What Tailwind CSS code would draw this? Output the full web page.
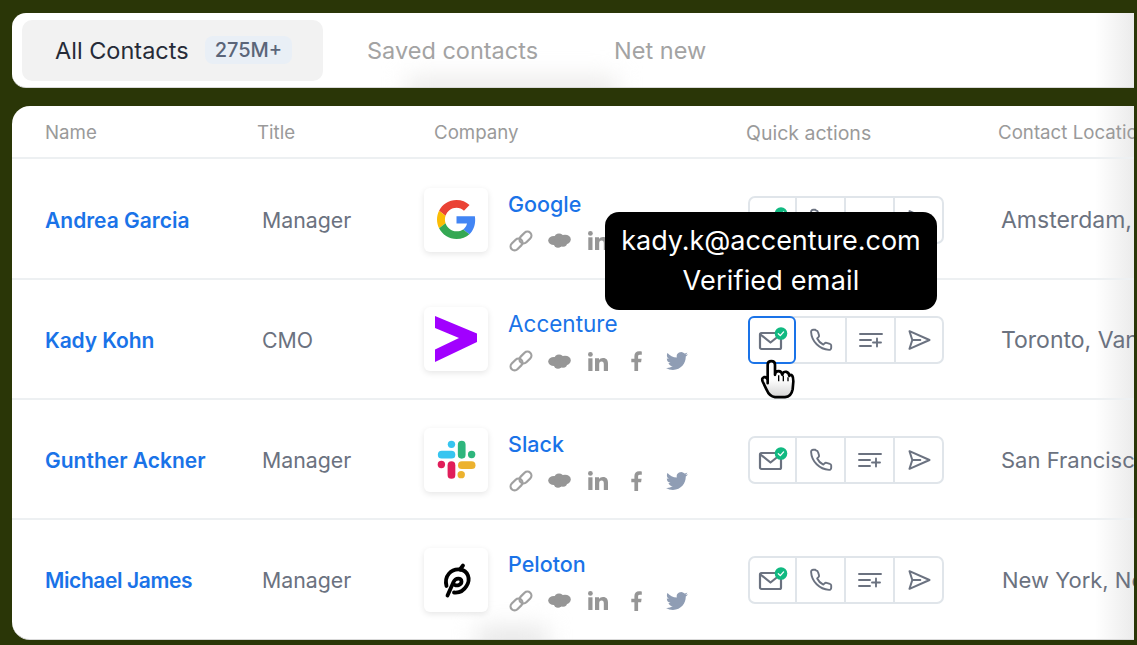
<!DOCTYPE html>
<html>
<head>
<meta charset="utf-8">
<script src="https://cdn.jsdelivr.net/npm/@tailwindcss/browser@4"></script>
</head>
<body class="m-0">
<svg class="hidden">
  <symbol id="link" viewBox="0 0 24 24"><g fill="none" stroke="currentColor" stroke-width="2.200"><rect x="0.800" y="11.500" width="13.500" height="8" rx="4" transform="rotate(-45 7.500 15.500)"/><rect x="9.700" y="4.500" width="13.500" height="8" rx="4" transform="rotate(-45 16.500 8.500)"/></g></symbol>
  <symbol id="cloud" viewBox="0 0 23 15"><g fill="currentColor"><ellipse cx="6" cy="7.500" rx="5.800" ry="4.600"/><ellipse cx="11" cy="5" rx="4.800" ry="4.600"/><ellipse cx="17" cy="6.500" rx="5.800" ry="4.800"/><ellipse cx="10" cy="10.500" rx="4.400" ry="4.200"/><ellipse cx="15" cy="10" rx="4" ry="3.800"/></g></symbol>
  <symbol id="in" viewBox="0 0 20 19"><g fill="currentColor"><circle cx="2.400" cy="2.400" r="2.400"/><rect x="0.300" y="6.300" width="4.200" height="12.700"/><path d="M7 6.300h4v1.800c.7-1.200 2.200-2.100 4-2.100 3.700 0 5 2.300 5 5.800V19h-4.200v-6.500c0-1.700-.5-3-2.200-3-1.800 0-2.400 1.300-2.400 3V19H7z"/></g></symbol>
  <symbol id="fb" viewBox="0 0 12 20"><path fill="currentColor" d="M3.400 20V11.200H0.300V7.700h3.100V5.100C3.400 2 5.300.3 8 .3c1.300 0 2.500.1 2.800.2v3.200H8.900c-1.500 0-1.800.7-1.800 1.800v2.200h3.500l-.5 3.500h-3V20z"/></symbol>
  <symbol id="tw" viewBox="0 0 24 24"><path fill="currentColor" d="M23.953 4.570a10 10 0 0 1-2.825.775 4.958 4.958 0 0 0 2.163-2.723c-.951.555-2.005.959-3.127 1.184a4.920 4.920 0 0 0-8.384 4.482C7.690 8.095 4.067 6.130 1.640 3.162a4.822 4.822 0 0 0-.666 2.475c0 1.710.870 3.213 2.188 4.096a4.904 4.904 0 0 1-2.228-.616v.060a4.923 4.923 0 0 0 3.946 4.827 4.996 4.996 0 0 1-2.212.085 4.936 4.936 0 0 0 4.604 3.417 9.867 9.867 0 0 1-6.102 2.105c-.390 0-.779-.023-1.170-.067a13.995 13.995 0 0 0 7.557 2.209c9.053 0 13.998-7.496 13.998-13.985 0-.210 0-.420-.015-.630A9.935 9.935 0 0 0 24 4.590z"/></symbol>
  <symbol id="mail" viewBox="0 0 30 26"><g fill="none" stroke="#6b7280" stroke-width="2.200" stroke-linecap="round" stroke-linejoin="round"><rect x="2" y="6" width="21" height="16" rx="1.500"/><path d="M2.500 7.500 12.500 15.500 22.500 7.500"/></g><circle cx="23" cy="6.500" r="6.300" fill="#10b981"/><path d="M20.300 6.700l2 1.900 3.300-3.700" fill="none" stroke="#fff" stroke-width="1.300" stroke-linecap="round" stroke-linejoin="round"/></symbol>
  <symbol id="phone" viewBox="0 0 24 24"><path fill="none" stroke="#6b7280" stroke-width="1.900" stroke-linecap="round" stroke-linejoin="round" d="M6.500 1.800H4.200C3 1.800 2 2.800 2.100 4c.5 9.500 8.400 17.300 17.900 17.900 1.200.1 2.200-.9 2.200-2.100v-2.300c0-.8-.5-1.500-1.300-1.700l-3.400-1c-.7-.2-1.400 0-1.900.5l-1.300 1.300c-2.600-1.200-4.900-3.500-6.100-6.100l1.300-1.300c.5-.5.700-1.200.5-1.900l-1-3.400c-.2-.8-.9-1.300-1.700-1.300z"/></symbol>
  <symbol id="list" viewBox="0 0 24 16"><path fill="none" stroke="#6b7280" stroke-width="1.900" stroke-linecap="round" d="M1 2h22M1 8h11M1 14h11M18 6.500v8M14 10.500h8"/></symbol>
  <symbol id="send" viewBox="0 0 24 22"><path fill="none" stroke="#6b7280" stroke-width="2" stroke-linejoin="round" stroke-linecap="round" d="M2.500 2.200 22.500 11 2.500 19.800 5.300 11zM5.300 11h8"/></symbol>
  <symbol id="google" viewBox="0 0 48 48"><path fill="#EA4335" d="M24 9.500c3.540 0 6.710 1.220 9.210 3.600l6.850-6.850C35.900 2.380 30.470 0 24 0 14.620 0 6.510 5.380 2.560 13.220l7.980 6.190C12.430 13.720 17.740 9.500 24 9.500z"/><path fill="#4285F4" d="M46.980 24.550c0-1.570-.15-3.090-.38-4.550H24v9.020h12.940c-.58 2.960-2.260 5.480-4.780 7.180l7.730 6c4.510-4.180 7.090-10.360 7.090-17.650z"/><path fill="#FBBC05" d="M10.530 28.590c-.48-1.450-.76-2.990-.76-4.590s.27-3.140.76-4.590l-7.980-6.190C.92 16.460 0 20.120 0 24c0 3.880.92 7.540 2.560 10.780l7.970-6.190z"/><path fill="#34A853" d="M24 48c6.480 0 11.930-2.130 15.890-5.810l-7.730-6c-2.150 1.450-4.920 2.300-8.160 2.300-6.260 0-11.570-4.220-13.470-9.910l-7.980 6.190C6.510 42.620 14.620 48 24 48z"/></symbol>
</svg>

<div class="relative w-[1137px] h-[645px] overflow-hidden bg-[#2a3607] pl-3 pt-[13px] pr-[3px]" style="font-family:Inter,'Liberation Sans',sans-serif">

  <!-- Tabs -->
  <div class="relative h-[75px] bg-[linear-gradient(90deg,#fff_1083px,#ebebeb_100%)] border-b border-[#d9d9d9] rounded-l-[14px] flex items-center pl-[10px] overflow-hidden">
    <div class="absolute left-[395px] top-[64px] w-[210px] h-[30px] bg-[#ecebea] blur-md"></div>
    <div class="relative w-[301px] h-[61px] rounded-[10px] bg-[#f2f2f2] flex items-center pl-[33px]">
      <span class="pt-[2px] text-[23.500px] text-[#262b38] leading-none">All Contacts</span>
      <span class="ml-[16px] h-[28px] px-[10px] flex items-center rounded-[8px] bg-[#e9eff6] text-[20px] font-medium text-[#5b6579]">275M+</span>
    </div>
    <span class="relative ml-[44px] pt-[2px] text-[23.500px] text-[#a3a3a3]">Saved contacts</span>
    <span class="relative ml-[76px] pt-[2px] text-[23.500px] text-[#a3a3a3]">Net new</span>
  </div>

  <!-- Table -->
  <div class="relative mt-[18px] h-[534px] bg-[linear-gradient(90deg,#fff_1083px,#ebebeb_100%)] border-b border-[#d9d9d9] rounded-l-[18px] overflow-hidden">
    <div class="absolute left-[465px] top-[522px] w-[70px] h-[24px] bg-[#e4e4e4] blur-md"></div>
    <div class="relative h-[53px] flex items-center pl-[33px] pt-[4px] border-b-2 border-[#edf0f2] text-[18.700px] text-[#9a9a9a] whitespace-nowrap overflow-hidden">
      <span class="w-[212px] shrink-0">Name</span>
      <span class="w-[177px] shrink-0">Title</span>
      <span class="w-[312px] shrink-0">Company</span>
      <span class="w-[252px] shrink-0 text-[19.500px]">Quick actions</span>
      <span>Contact Location</span>
    </div>

    <!-- Row 1 -->
    <div class="relative h-[121px] flex items-center pl-[33px] pt-[3px] border-b-2 border-[#edf0f2] whitespace-nowrap overflow-hidden">
      <span class="pt-[2px] w-[217px] shrink-0 text-[21px] font-semibold text-[#1a73e8]">Andrea Garcia</span>
      <span class="pt-[2px] w-[162px] shrink-0 text-[21.300px] text-[#6b7280]">Manager</span>
      <div class="w-[324px] shrink-0 flex">
        <div class="w-[64px] h-[64px] rounded-[6px] bg-white shadow-[0_2px_6px_rgba(0,0,0,0.1)] flex items-center justify-center"><svg class="w-[39px] h-[39px]"><use href="#google"/></svg></div>
        <div class="ml-[20px] mt-[2px]">
          <div class="text-[21.500px] font-medium text-[#1a73e8] leading-[28px]">Google</div>
          <div class="mt-[11px] h-[24px] flex items-center text-[#a0a0a0]">
            <svg class="w-[24px] h-[24px] ml-[1px]"><use href="#link"/></svg>
            <svg class="w-[23px] h-[15px] ml-[15px] text-[#969696]"><use href="#cloud"/></svg>
            <svg class="w-[20px] h-[19px] ml-[17px] text-[#969696]"><use href="#in"/></svg>
            <svg class="w-[12px] h-[20px] ml-[23px] text-[#969696]"><use href="#fb"/></svg>
            <svg class="w-[22px] h-[22px] ml-[23px] text-[#8f9db4]"><use href="#tw"/></svg>
          </div>
        </div>
      </div>
      <div class="w-[254px] shrink-0 flex">
        <div class="flex w-[196px] h-[48px] rounded-[7px] border-2 border-[#e0e5ea]">
          <div class="w-[45px] flex items-center justify-center"><svg class="ml-[1px] w-[30px] h-[26px]"><use href="#mail"/></svg></div>
          <div class="w-[49px] flex items-center justify-center border-l-2 border-[#e0e5ea]"><svg class="w-[24px] h-[24px]"><use href="#phone"/></svg></div>
          <div class="w-[49px] flex items-center justify-center border-l-2 border-[#e0e5ea]"><svg class="w-[24px] h-[16px]"><use href="#list"/></svg></div>
          <div class="flex-1 flex items-center justify-center border-l-2 border-[#e0e5ea]"><svg class="w-[24px] h-[22px]"><use href="#send"/></svg></div>
        </div>
      </div>
      <span class="text-[23px] text-[#6b7280] ml-[-1px]">Amsterdam, Netherlands</span>
    </div>

    <!-- Row 2 -->
    <div class="relative h-[120px] flex items-center pl-[33px] pt-[2px] border-b-2 border-[#edf0f2] whitespace-nowrap overflow-hidden">
      <span class="pt-[2px] w-[217px] shrink-0 text-[21px] tracking-[-0.1px] font-semibold text-[#1a73e8]">Kady Kohn</span>
      <span class="pt-[2px] w-[162px] shrink-0 text-[21.300px] text-[#6b7280]">CMO</span>
      <div class="w-[324px] shrink-0 flex">
        <div class="w-[64px] h-[64px] rounded-[6px] bg-white shadow-[0_2px_6px_rgba(0,0,0,0.1)] flex items-center justify-center"><svg class="w-[42px] h-[46px]" viewBox="0 0 42 46"><path fill="#a100ff" d="M0 0 42 17.500V26L0 46V33.500L24 22 0 12z"/></svg></div>
        <div class="ml-[20px] mt-[3px]">
          <div class="text-[22.500px] text-[#1a73e8] leading-[28px]">Accenture</div>
          <div class="mt-[11px] h-[24px] flex items-center text-[#a0a0a0]">
            <svg class="w-[24px] h-[24px] ml-[1px]"><use href="#link"/></svg>
            <svg class="w-[23px] h-[15px] ml-[15px] text-[#969696]"><use href="#cloud"/></svg>
            <svg class="w-[20px] h-[19px] ml-[17px] text-[#969696]"><use href="#in"/></svg>
            <svg class="w-[12px] h-[20px] ml-[23px] text-[#969696]"><use href="#fb"/></svg>
            <svg class="w-[22px] h-[22px] ml-[23px] text-[#8f9db4]"><use href="#tw"/></svg>
          </div>
        </div>
      </div>
      <div class="w-[254px] shrink-0 flex">
        <div class="flex w-[196px] h-[48px] rounded-[7px] border-2 border-[#e0e5ea]">
          <div class="w-[48px] -ml-[2px] -mt-[2px] flex items-center justify-center border-2 border-[#1a73e8] rounded-[6px] bg-white h-[48px] shrink-0"><svg class="ml-[1px] w-[30px] h-[26px]"><use href="#mail"/></svg></div>
          <div class="w-[49px] flex items-center justify-center"><svg class="w-[24px] h-[24px]"><use href="#phone"/></svg></div>
          <div class="w-[49px] flex items-center justify-center border-l-2 border-[#e0e5ea]"><svg class="w-[24px] h-[16px]"><use href="#list"/></svg></div>
          <div class="flex-1 flex items-center justify-center border-l-2 border-[#e0e5ea]"><svg class="w-[24px] h-[22px]"><use href="#send"/></svg></div>
        </div>
      </div>
      <span class="text-[23px] text-[#6b7280] ml-[-1px]">Toronto, Vancouver</span>
    </div>

    <!-- Row 3 -->
    <div class="relative h-[120px] flex items-center pl-[33px] pt-[2px] border-b-2 border-[#edf0f2] whitespace-nowrap overflow-hidden">
      <span class="pt-[2px] w-[217px] shrink-0 text-[21px] font-semibold text-[#1a73e8]">Gunther Ackner</span>
      <span class="pt-[2px] w-[162px] shrink-0 text-[21.300px] text-[#6b7280]">Manager</span>
      <div class="w-[324px] shrink-0 flex">
        <div class="w-[64px] h-[64px] rounded-[6px] bg-white shadow-[0_2px_6px_rgba(0,0,0,0.1)] flex items-center justify-center">
          <svg class="w-[39px] h-[39px]" viewBox="0 0 116 116" fill="none" stroke-linecap="round">
            <path d="M14 43.500H43" stroke="#36c5f0" stroke-width="23"/><circle cx="43" cy="13" r="11" fill="#36c5f0"/>
            <path d="M73.500 14V44" stroke="#2eb67d" stroke-width="23"/><circle cx="103" cy="43" r="11" fill="#2eb67d"/>
            <path d="M74 75H103" stroke="#ecb22e" stroke-width="23"/><circle cx="72" cy="103" r="11" fill="#ecb22e"/>
            <path d="M43 75V104" stroke="#e01e5a" stroke-width="23"/><circle cx="13" cy="73" r="11" fill="#e01e5a"/>
          </svg>
        </div>
        <div class="ml-[20px] mt-[2px]">
          <div class="text-[21.500px] font-medium text-[#1a73e8] leading-[28px]">Slack</div>
          <div class="mt-[11px] h-[24px] flex items-center text-[#a0a0a0]">
            <svg class="w-[24px] h-[24px] ml-[1px]"><use href="#link"/></svg>
            <svg class="w-[23px] h-[15px] ml-[15px] text-[#969696]"><use href="#cloud"/></svg>
            <svg class="w-[20px] h-[19px] ml-[17px] text-[#969696]"><use href="#in"/></svg>
            <svg class="w-[12px] h-[20px] ml-[23px] text-[#969696]"><use href="#fb"/></svg>
            <svg class="w-[22px] h-[22px] ml-[23px] text-[#8f9db4]"><use href="#tw"/></svg>
          </div>
        </div>
      </div>
      <div class="w-[254px] shrink-0 flex">
        <div class="flex w-[196px] h-[48px] rounded-[7px] border-2 border-[#e0e5ea]">
          <div class="w-[45px] flex items-center justify-center"><svg class="ml-[1px] w-[30px] h-[26px]"><use href="#mail"/></svg></div>
          <div class="w-[49px] flex items-center justify-center border-l-2 border-[#e0e5ea]"><svg class="w-[24px] h-[24px]"><use href="#phone"/></svg></div>
          <div class="w-[49px] flex items-center justify-center border-l-2 border-[#e0e5ea]"><svg class="w-[24px] h-[16px]"><use href="#list"/></svg></div>
          <div class="flex-1 flex items-center justify-center border-l-2 border-[#e0e5ea]"><svg class="w-[24px] h-[22px]"><use href="#send"/></svg></div>
        </div>
      </div>
      <span class="text-[22px] text-[#6b7280] ml-[-1px]">San Francisco, California</span>
    </div>

    <!-- Row 4 -->
    <div class="relative h-[120px] flex items-center pl-[33px] whitespace-nowrap overflow-hidden">
      <span class="pt-[2px] w-[217px] shrink-0 text-[21px] tracking-[-0.4px] font-semibold text-[#1a73e8]">Michael James</span>
      <span class="pt-[2px] w-[162px] shrink-0 text-[21.300px] text-[#6b7280]">Manager</span>
      <div class="w-[324px] shrink-0 flex">
        <div class="w-[64px] h-[64px] rounded-[6px] bg-white shadow-[0_2px_6px_rgba(0,0,0,0.1)] flex items-center justify-center">
          <svg class="ml-[-2px] w-[55px] h-[50px] shrink-0" viewBox="0 0 55 50" fill="none" stroke="#000" stroke-width="3.800" stroke-linecap="round">
            <path d="M18.500 31C16 21 23 13.500 32 14.500 40 15.500 43 24 38.500 31 35.500 36 30.500 38 26 37.500"/>
            <path d="M32 14.500 35 10.500"/>
            <path d="M19.500 40.500 25.500 27C27.500 22.500 33.500 22.500 33.500 26.500 33.500 30 29 31 27 30"/>
          </svg>
        </div>
        <div class="ml-[20px] mt-[2px]">
          <div class="text-[21.500px] font-medium text-[#1a73e8] leading-[28px]">Peloton</div>
          <div class="mt-[11px] h-[24px] flex items-center text-[#a0a0a0]">
            <svg class="w-[24px] h-[24px] ml-[1px]"><use href="#link"/></svg>
            <svg class="w-[23px] h-[15px] ml-[15px] text-[#969696]"><use href="#cloud"/></svg>
            <svg class="w-[20px] h-[19px] ml-[17px] text-[#969696]"><use href="#in"/></svg>
            <svg class="w-[12px] h-[20px] ml-[23px] text-[#969696]"><use href="#fb"/></svg>
            <svg class="w-[22px] h-[22px] ml-[23px] text-[#8f9db4]"><use href="#tw"/></svg>
          </div>
        </div>
      </div>
      <div class="w-[254px] shrink-0 flex">
        <div class="flex w-[196px] h-[48px] rounded-[7px] border-2 border-[#e0e5ea]">
          <div class="w-[45px] flex items-center justify-center"><svg class="ml-[1px] w-[30px] h-[26px]"><use href="#mail"/></svg></div>
          <div class="w-[49px] flex items-center justify-center border-l-2 border-[#e0e5ea]"><svg class="w-[24px] h-[24px]"><use href="#phone"/></svg></div>
          <div class="w-[49px] flex items-center justify-center border-l-2 border-[#e0e5ea]"><svg class="w-[24px] h-[16px]"><use href="#list"/></svg></div>
          <div class="flex-1 flex items-center justify-center border-l-2 border-[#e0e5ea]"><svg class="w-[24px] h-[22px]"><use href="#send"/></svg></div>
        </div>
      </div>
      <span class="text-[22px] text-[#6b7280]">New York, New York</span>
    </div>
  </div>

  <!-- Tooltip -->
  <div class="absolute left-[605px] top-[212px] w-[332px] h-[98px] rounded-[14px] bg-black text-white text-[27px] text-center leading-[40px] pt-[9px]">
    <div class="tracking-[-0.05px]">kady.k@accenture.com</div>
    <div class="tracking-[0.2px]">Verified email</div>
  </div>

  <!-- Cursor -->
  <svg class="absolute left-[760px] top-[358px] w-[35px] h-[42px]" viewBox="90 175 105 125">
    <defs><linearGradient id="h" x1="0" y1="0" x2="0" y2="1"><stop offset="0.5" stop-color="#fff"/><stop offset="1" stop-color="#d4d4d4"/></linearGradient></defs>
    <path fill="url(#h)" stroke="#000" stroke-width="8" stroke-linejoin="round" d="M113 250V195Q113 184 124 184 135 184 135 195V225Q135 214 146 214 155 214 157 225 159 214 169 216 177 218 178 228 182 222 187 228 190 232 190 245L188 268Q184 290 165 292H135Q118 290 110 270L98 245Q94 235 102 232 110 230 113 240Z"/>
    <path d="M146 226V244M160 228V244M174 232V244" stroke="#000" stroke-width="4" fill="none"/>
  </svg>
</div>
</body>
</html>
